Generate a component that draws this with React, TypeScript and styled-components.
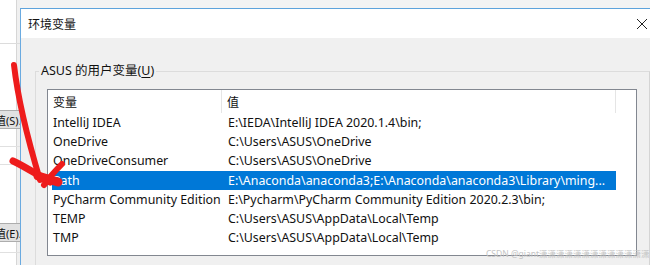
import styled, { createGlobalStyle } from "styled-components";

const GlobalStyle = createGlobalStyle`
  html, body {
    margin: 0;
    padding: 0;
    background: #f3f3f3;
    overflow: hidden;
  }
  * { box-sizing: border-box; }
`;

const FONT = `"Noto Sans", "Noto Sans CJK SC", sans-serif`;

type Variable = { name: string; value: string };

const variables: Variable[] = [
  { name: "IntelliJ IDEA", value: "E:\\IEDA\\IntelliJ IDEA 2020.1.4\\bin;" },
  { name: "OneDrive", value: "C:\\Users\\ASUS\\OneDrive" },
  { name: "OneDriveConsumer", value: "C:\\Users\\ASUS\\OneDrive" },
  {
    name: "Path",
    value: "E:\\Anaconda\\anaconda3;E:\\Anaconda\\anaconda3\\Library\\ming...",
  },
  {
    name: "PyCharm Community Edition",
    value: "E:\\Pycharm\\PyCharm Community Edition 2020.2.3\\bin;",
  },
  { name: "TEMP", value: "C:\\Users\\ASUS\\AppData\\Local\\Temp" },
  { name: "TMP", value: "C:\\Users\\ASUS\\AppData\\Local\\Temp" },
];

const SELECTED = "Path";

export default function App() {
  return (
    <>
      <GlobalStyle />
      <SPage>
        <SParentStrip>
          <SParentPane />
          <SParentButton $top={66}>值(S)...</SParentButton>
          <SParentLine $top={17} />
          <SParentLine $top={17} />
          <SParentButton $top={58}>值(E)...</SParentButton>
          <SParentLine $top={10} />
        </SParentStrip>

        <SDialog>
          <STitleBar>
            <STitle>环境变量</STitle>
            <SClose viewBox="0 0 12 12" width="12" height="12">
              <path d="M1 1 L11 11 M11 1 L1 11" stroke="#222" strokeWidth="1" />
            </SClose>
          </STitleBar>

          <SBody>
            <SGroup>
              <SLegend>
                ASUS 的用户变量(<u>U</u>)
              </SLegend>
              <SList>
                <SHeader>
                  <SHeaderCell $width={174}>变量</SHeaderCell>
                  <SHeaderCell $width={394}>值</SHeaderCell>
                  <SHeaderRest />
                </SHeader>
                {variables.map((v) => (
                  <SRow key={v.name} $selected={v.name === SELECTED}>
                    <SNameCell>{v.name}</SNameCell>
                    <SValueCell>{v.value}</SValueCell>
                  </SRow>
                ))}
              </SList>
            </SGroup>
          </SBody>
        </SDialog>

        <SWatermark>CSDN @giant潇潇潇潇潇潇潇潇潇潇潇潇潇</SWatermark>

        <SArrow viewBox="0 0 80 200" width="80" height="200">
          <g
            fill="none"
            stroke="#ee1c1c"
            strokeLinecap="round"
            strokeLinejoin="round"
          >
            <path d="M14 65 C 18 100, 28 140, 40 180" strokeWidth="6" />
            <path d="M13 161 C 24 166, 36 174, 50 182" strokeWidth="7" />
            <path d="M62 164 C 56 170, 50 176, 44 185" strokeWidth="6" />
            <path d="M38 176 L 58 182" strokeWidth="9" />
          </g>
        </SArrow>
      </SPage>
    </>
  );
}

const SPage = styled.div`
  position: relative;
  display: flex;
  width: 650px;
  height: 265px;
  overflow: hidden;
  font-family: ${FONT};
`;

const SParentStrip = styled.div`
  display: flex;
  flex-direction: column;
  width: 20px;
  flex-shrink: 0;
  background: linear-gradient(
    to right,
    #ffffff 0 16px,
    #d6d6d6 16px 17px,
    #f0f0f0 17px
  );
  overflow: hidden;
`;

const SParentPane = styled.div`
  height: 44px;
  flex-shrink: 0;
  border-bottom: 1px solid #dcdcdc;
`;

const SParentButton = styled.div<{ $top: number }>`
  margin-top: ${(p) => p.$top}px;
  margin-left: -5px;
  height: 19px;
  flex-shrink: 0;
  display: flex;
  align-items: center;
  white-space: nowrap;
  background: #e1e1e1;
  border-top: 1px solid #adadad;
  border-bottom: 1px solid #adadad;
  font-size: 11px;
  color: #111;
`;

const SParentLine = styled.div<{ $top: number }>`
  margin-top: ${(p) => p.$top}px;
  height: 1px;
  flex-shrink: 0;
  background: #e0e0e0;
`;

const SDialog = styled.div`
  flex: 1;
  margin-top: 8px;
  display: flex;
  flex-direction: column;
  overflow: hidden;
  background: #f0f0f0;
  border-top: 1px solid #5ea3dc;
  border-left: 1px solid #6aaae0;
`;

const STitleBar = styled.div`
  height: 29px;
  flex-shrink: 0;
  display: flex;
  align-items: center;
  justify-content: space-between;
  padding: 0 2px 0 7px;
  background: #ffffff;
`;

const STitle = styled.span`
  font-family: "Noto Sans CJK SC", sans-serif;
  font-size: 12px;
  color: #111;
`;

const SClose = styled.svg`
  display: block;
`;

const SBody = styled.div`
  flex-shrink: 0;
  padding: 25px 0 0 14px;
`;

const SGroup = styled.fieldset`
  margin: 0;
  padding: 10px 12px 0 11px;
  height: 240px;
  border: 1px solid #dcdcdc;
  border-right-color: #d4d4d4;
`;

const SLegend = styled.legend`
  margin-left: -8px;
  padding: 0 2px;
  font-size: 12.5px;
  color: #111;
  line-height: 16px;

  u {
    text-underline-offset: 2px;
  }
`;

const SList = styled.div`
  height: 167px;
  background: #ffffff;
  border: 1px solid #828790;
  overflow: hidden;
`;

const SHeader = styled.div`
  display: flex;
  height: 23px;
`;

const SHeaderCell = styled.div<{ $width: number }>`
  width: ${(p) => p.$width}px;
  display: flex;
  align-items: center;
  padding-left: 5px;
  font-family: "Noto Sans CJK SC", sans-serif;
  font-size: 12px;
  color: #111;
  border-right: 1px solid #e5e5e5;
`;

const SHeaderRest = styled.div`
  flex: 1;
`;

const SRow = styled.div<{ $selected: boolean }>`
  display: flex;
  align-items: center;
  height: 19.2px;
  width: 564px;
  margin-left: 4px;
  background: ${(p) => (p.$selected ? "#0078d7" : "transparent")};
  color: ${(p) => (p.$selected ? "#ffffff" : "#111111")};
  font-size: 12.4px;
  white-space: nowrap;
`;

const SNameCell = styled.div`
  width: 170px;
  padding-left: 1px;
  overflow: hidden;
`;

const SValueCell = styled.div`
  flex: 1;
  padding-left: 6px;
  overflow: hidden;
`;

const SWatermark = styled.div`
  position: absolute;
  left: 486px;
  top: 247px;
  font-family: "Noto Sans", "Noto Sans CJK SC", sans-serif;
  font-size: 8.5px;
  color: #c4c4c4;
  white-space: nowrap;
`;

const SArrow = styled.svg`
  position: absolute;
  left: 0;
  top: 0;
  pointer-events: none;
`;
